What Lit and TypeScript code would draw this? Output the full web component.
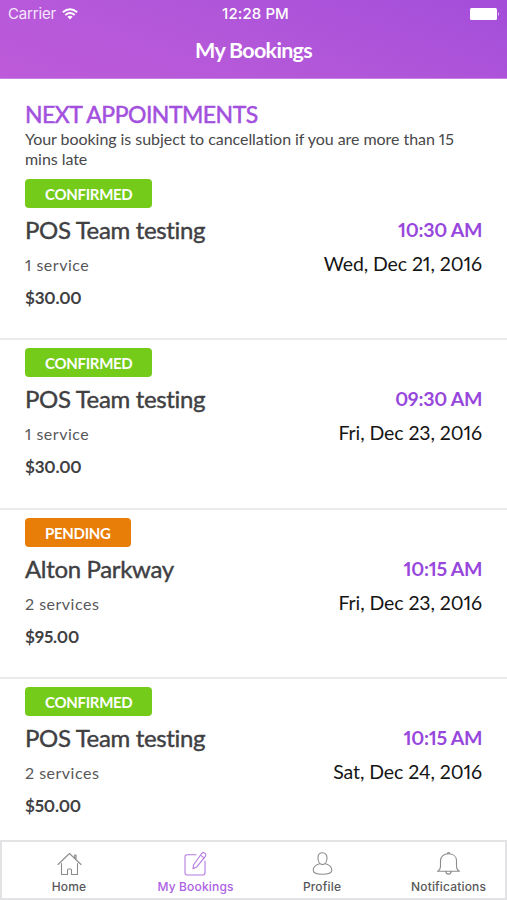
import { LitElement, html, css, svg } from "lit";
import { customElement, property } from "lit/decorators.js";

type Booking = { status: string; place: string; services: string; price: string; time: string; date: string };

const BOOKINGS: Booking[] = [
  { status: "CONFIRMED", place: "POS Team testing", services: "1 service", price: "$30.00", time: "10:30 AM", date: "Wed, Dec 21, 2016" },
  { status: "CONFIRMED", place: "POS Team testing", services: "1 service", price: "$30.00", time: "09:30 AM", date: "Fri, Dec 23, 2016" },
  { status: "PENDING", place: "Alton Parkway", services: "2 services", price: "$95.00", time: "10:15 AM", date: "Fri, Dec 23, 2016" },
  { status: "CONFIRMED", place: "POS Team testing", services: "2 services", price: "$50.00", time: "10:15 AM", date: "Sat, Dec 24, 2016" },
];

const ICONS: Record<string, unknown> = {
  home: svg`<path d="M1 13.500 12.500 2.500 24 13.500M17.700 7.500V4H19v4.700M4.500 12.500V23.500h6v-4.500q0-1 1-1h2q1 0 1 1v4.500h6V12.500"/>`,
  bookings: svg`<path d="M13 3.800H4.200Q2 3.800 2 6V21.800Q2 24 4.200 24H19.800Q22 24 22 21.800V10"/><path d="M10 17.700 10.600 13.700 18.500 2.700Q20.200 1 21.900 2.100 23.400 3.400 22.500 5.200L14 15.700ZM17.500 4.100l3.800 3"/>`,
  profile: svg`<path d="M12.500 1.800c-2.800 0-4.500 2-4.500 5 0 3.600 1.700 6.800 4.500 6.800s4.500-3.200 4.500-6.800c0-3-1.700-5-4.500-5ZM9.500 12.800C6 13.800 3.200 15.900 3.200 19.300c0 2.600 3.400 4 9.300 4s9.300-1.400 9.300-4c0-3.400-2.800-5.500-6.300-6.500"/>`,
  bell: svg`<path d="M11.300 2.900Q11.300 1.500 12.500 1.500T13.700 2.900M1.500 20.300Q4.500 18.800 4.500 14.800V9.800C4.500 5.300 8 2.800 12.500 2.800S20.500 5.300 20.500 9.800V14.800Q20.500 18.800 23.500 20.300ZM9.800 20.600Q10.200 23.100 12.500 23.100T15.200 20.600"/>`,
};

@customElement("booking-row")
class BookingRow extends LitElement {
  @property({ attribute: false }) booking!: Booking;

  static styles = css`
    :host { display: block; box-sizing: border-box; height: 169.33px; padding: 8px 25px 0; border-bottom: 2px solid #ebebeb; font-family: Lato, sans-serif; color: #404043; font-variant-ligatures: none; font-variant-numeric: proportional-nums; }
    :host(:last-of-type) { border-bottom: 0; }
    .badge { display: inline-flex; align-items: center; box-sizing: border-box; height: 29px; padding: 1px 20px 0; border-radius: 4px; background: #74cb19; color: #fff; font-size: 15px; font-weight: 700; letter-spacing: -0.3px; vertical-align: top; }
    .pending { background: #e87d08; }
    .line { display: flex; justify-content: space-between; white-space: nowrap; }
    .top { height: 43px; line-height: 43px; }
    .place { font-size: 24px; letter-spacing: -0.34px; -webkit-text-stroke: 0.4px currentColor; }
    .time { font-size: 19.5px; line-height: 44px; font-weight: 700; color: #9747dc; letter-spacing: -0.25px; margin-right: -0.25px; }
    .second { height: 28px; line-height: 28px; }
    .services { font-size: 16px; color: #58585a; letter-spacing: 0.5px; }
    .date { font-size: 19.5px; line-height: 26px; color: #151515; letter-spacing: -0.09px; }
    .price { height: 36px; line-height: 37px; font-size: 17px; font-weight: 700; letter-spacing: -0.2px; }
  `;

  render() {
    const b = this.booking;
    return html`
      <div class="badge ${b.status === "PENDING" ? "pending" : ""}">${b.status}</div>
      <div class="line top"><span class="place">${b.place}</span><span class="time">${b.time}</span></div>
      <div class="line second"><span class="services">${b.services}</span><span class="date">${b.date}</span></div>
      <div class="price">${b.price}</div>
    `;
  }
}

@customElement("app-root")
class AppRoot extends LitElement {
  static styles = css`
    :host { display: flex; flex-direction: column; width: 507px; height: 900px; overflow: hidden; background: #fff; font-family: Lato, sans-serif; font-variant-ligatures: none; font-variant-numeric: proportional-nums; }
    .header { flex: none; box-sizing: border-box; height: 79px; background: linear-gradient(20deg, #bd5bda 0%, #b257d9 50%, #a34dda 100%); color: #fff; border-bottom: 1px solid #c583e4; }
    .status { display: grid; grid-template-columns: 1fr auto 1fr; align-items: center; height: 28px; padding: 0 8px; font: 15px/28px Inter, sans-serif; }
    .carrier { display: flex; align-items: center; gap: 6px; letter-spacing: -0.15px; color: #f6e6fb; }
    .clock { font-weight: 500; letter-spacing: 0.1px; margin: 0 -2px 0 2px; }
    .battery { justify-self: end; display: block; }
    .title { margin: 0; height: 46px; line-height: 44px; text-align: center; font-size: 21.5px; font-weight: 700; letter-spacing: -0.7px; }
    .intro { flex: none; height: 92px; box-sizing: border-box; padding: 20px 25px 0; color: #48484a; }
    .heading { margin: 0; height: 30px; line-height: 30px; font-size: 23px; font-weight: 400; color: #a250dd; letter-spacing: -0.5px; -webkit-text-stroke: 0.5px currentColor; }
    .note { margin: 0; font-size: 16px; line-height: 19.5px; letter-spacing: -0.05px; }
    .list { flex: 1; min-height: 0; overflow: hidden; }
    .tabs { flex: none; box-sizing: border-box; height: 60px; display: grid; grid-template-columns: repeat(4, 126.5px); padding-left: 3.8px; border: 2px solid #e3e3e5; }
    .tab { display: flex; flex-direction: column; align-items: center; padding-top: 9px; font: 500 12px/20px Inter, sans-serif; letter-spacing: 0.17px; color: #58585a; }
    .active { color: #ad62e3; }
    .icon { display: block; fill: none; stroke: #8c8c8e; stroke-width: 1.1; stroke-linejoin: round; stroke-linecap: round; }
    .active .icon { stroke: #b67be3; }
  `;

  render() {
    const tab = (icon: string, label: string, active = false) => html`
      <div class="tab ${active ? "active" : ""}">
        <svg class="icon" width="25" height="26" viewBox="0 0 25 26">${ICONS[icon]}</svg><span>${label}</span>
      </div>`;
    return html`
      <div class="header">
        <div class="status">
          <div class="carrier"><span>Carrier</span>
            <svg width="16" height="12" viewBox="0 0 16 12" fill="none" stroke="#fff" stroke-width="1.9"><path d="M.8 4.300Q8-2 15.200 4.300M3.300 7Q8 3 12.700 7"/><path d="M8 11.500 5.400 8.800Q8 6.800 10.600 8.800Z" fill="#fff" stroke="none"/></svg>
          </div>
          <span class="clock">12:28 PM</span>
          <svg class="battery" width="29" height="12" viewBox="0 0 29 12" fill="#fff"><rect width="27" height="12" rx="1.5"/><path d="M28 4q1.500 2 0 4z"/></svg>
        </div>
        <h1 class="title">My Bookings</h1>
      </div>
      <div class="intro">
        <h2 class="heading">NEXT APPOINTMENTS</h2>
        <p class="note">Your booking is subject to cancellation if you are more than 15<br />mins late</p>
      </div>
      <div class="list">${BOOKINGS.map((b) => html`<booking-row .booking=${b}></booking-row>`)}</div>
      <div class="tabs">${tab("home", "Home")}${tab("bookings", "My Bookings", true)}${tab("profile", "Profile")}${tab("bell", "Notifications")}</div>
    `;
  }
}
